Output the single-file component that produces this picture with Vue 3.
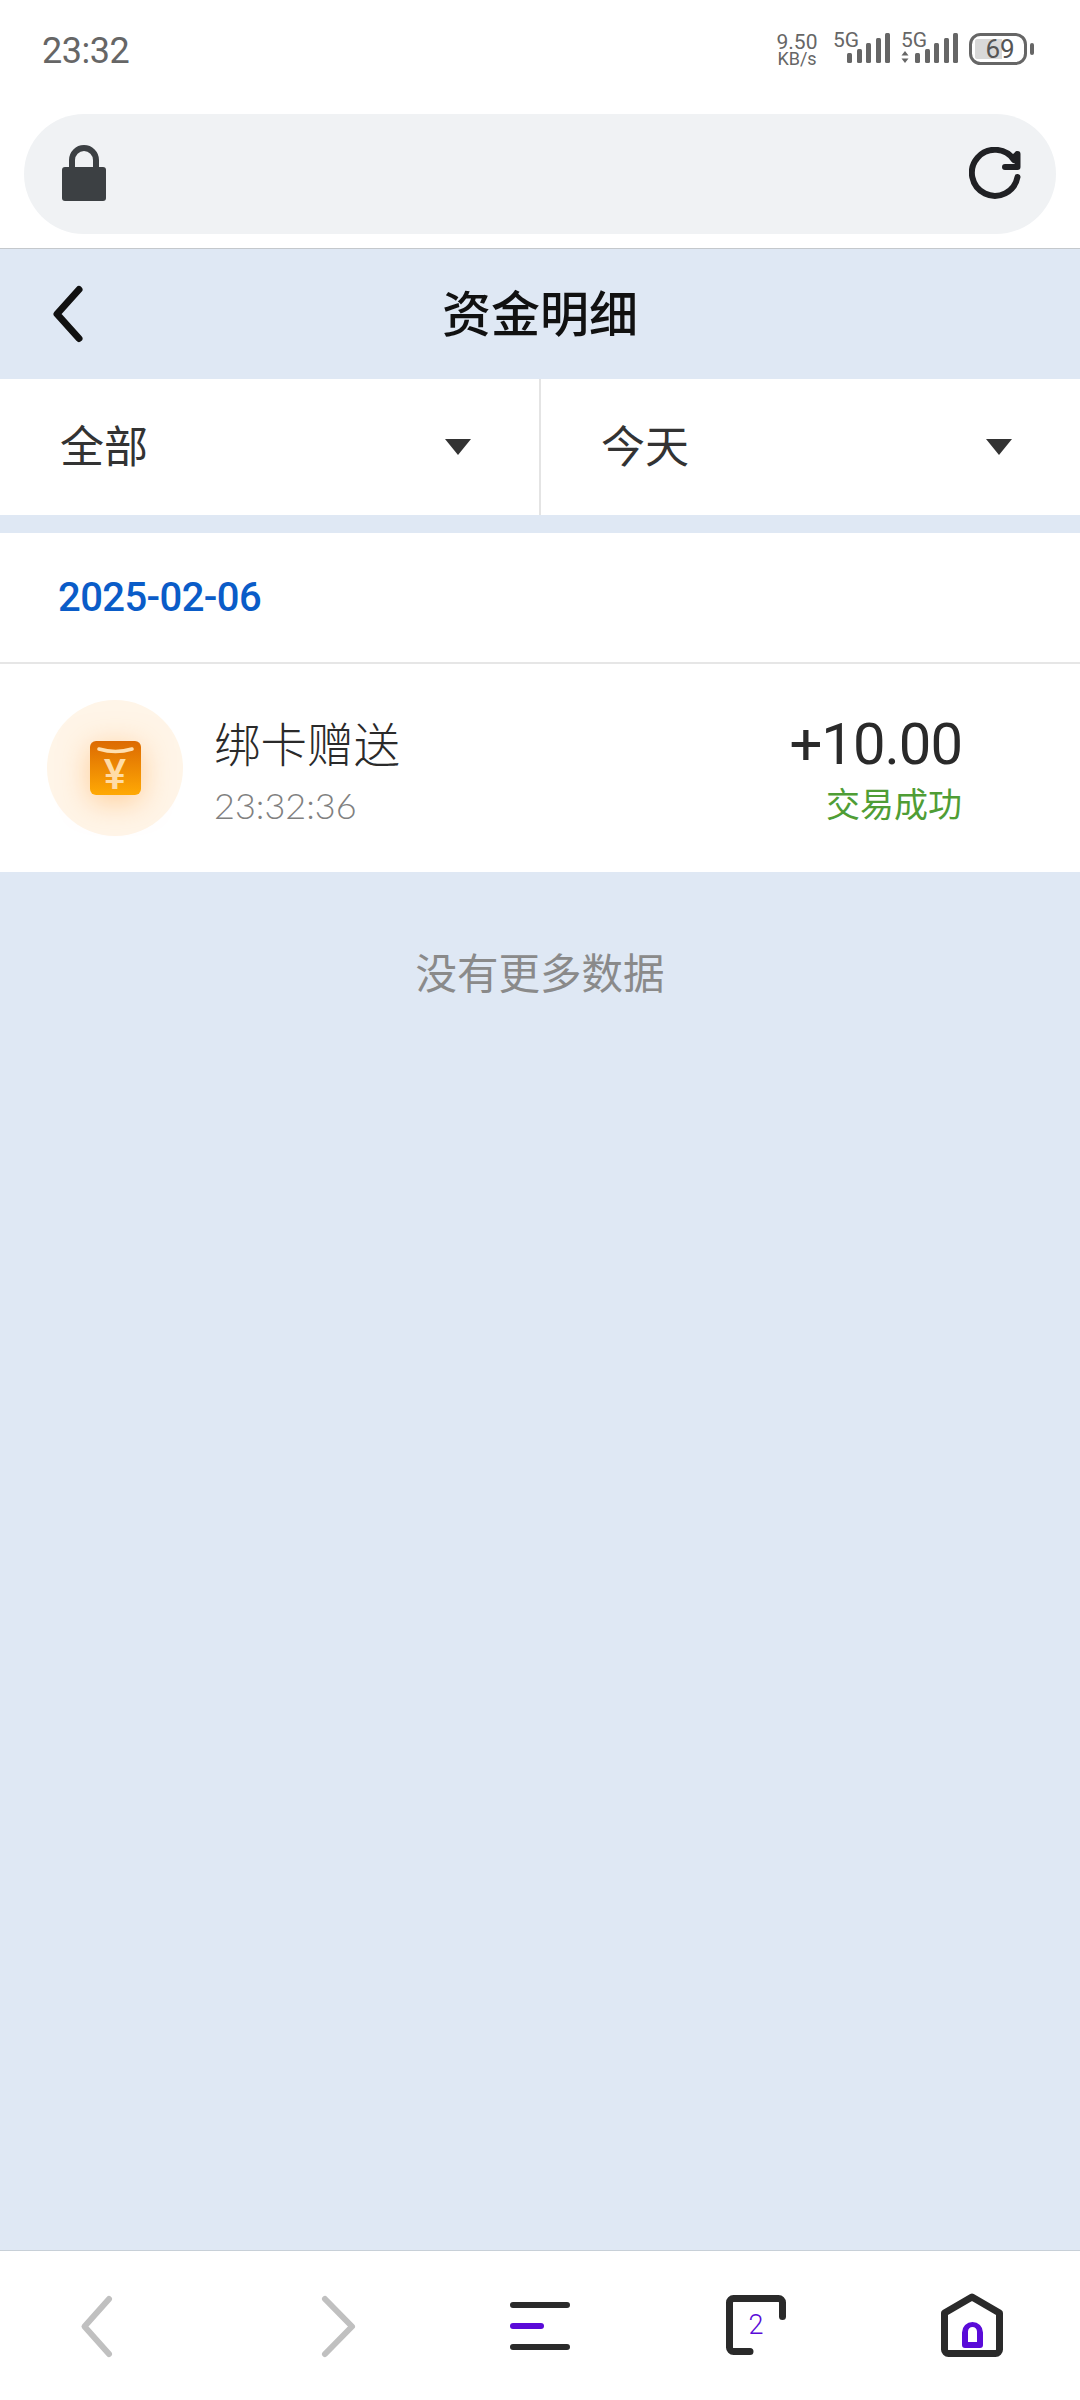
<template>
  <div class="page">
    <div class="status-bar">
      <span class="clock">23:32</span>
      <div class="status-icons">
        <div class="speed">
          <span>9.50</span>
          <span class="speed-unit">KB/s</span>
        </div>
        <div class="sim">
          <span class="sim-label">5G</span>
          <svg width="43" height="30" viewBox="0 0 43 30">
            <rect v-for="bar in bars" :key="bar.x" :x="bar.x" :y="bar.y" width="5" :height="30 - bar.y" rx="1.5" fill="#666" />
          </svg>
        </div>
        <div class="sim">
          <span class="sim-label">5G</span>
          <svg class="updown" width="8" height="12" viewBox="0 0 8 12">
            <path d="M4 0 7.500 4.500H.5ZM4 12 .5 7.500h7Z" fill="#666" />
          </svg>
          <svg width="43" height="30" viewBox="0 0 43 30">
            <rect v-for="bar in bars" :key="bar.x" :x="bar.x" :y="bar.y" width="5" :height="30 - bar.y" rx="1.500" fill="#666" />
          </svg>
        </div>
        <svg class="battery" width="66" height="32" viewBox="0 0 66 32">
          <rect x="1.500" y="1.500" width="55" height="29" rx="10" fill="none" stroke="#666" stroke-width="3" />
          <path d="M8 6h25v20H8a2 2 0 0 1-2-2V8a2 2 0 0 1 2-2Z" fill="#d9d9d9" />
          <text x="31" y="25" text-anchor="middle" class="battery-text">69</text>
          <rect x="61" y="10" width="4" height="12" rx="2" fill="#666" />
        </svg>
      </div>
    </div>

    <div class="address-wrap">
      <div class="address">
        <svg class="lock" width="44" height="56" viewBox="0 0 44 56">
          <path d="M10 24V15a12 12 0 0 1 24 0v9" fill="none" stroke="#3c4043" stroke-width="6" />
          <rect x="0" y="22" width="44" height="34" rx="3" fill="#3c4043" />
        </svg>
        <svg width="54" height="54" viewBox="0 0 54 54">
          <path d="M48.500 30A23 23 0 1 1 45 13" fill="none" stroke="#202124" stroke-width="6" stroke-linecap="round" />
          <path d="M48.500 7V20H36" fill="none" stroke="#202124" stroke-width="6" stroke-linecap="round" stroke-linejoin="round" />
          <path d="M40 10 48 4V18Z" fill="#202124" />
        </svg>
      </div>
    </div>

    <header class="title-bar">
      <svg class="back" width="36" height="64" viewBox="0 0 36 64">
        <path d="M30 7.500 8 32l22 24.500" fill="none" stroke="#111" stroke-width="7" stroke-linecap="round" stroke-linejoin="round" />
      </svg>
      <h1>资金明细</h1>
      <span></span>
    </header>

    <div class="filters">
      <div v-for="filter in filters" :key="filter" class="filter">
        <span class="filter-name">{{ filter }}</span>
        <svg width="28" height="16" viewBox="0 0 28 16">
          <path d="M1 0H27L14 16Z" fill="#333" />
        </svg>
      </div>
    </div>

    <div class="date-row">2025-02-06</div>

    <div class="record">
      <div class="record-icon">
        <div class="packet">
          <svg width="37" height="12" viewBox="0 0 37 12">
            <path d="M2 3Q18.500 8 35 3" fill="none" stroke="#ffdfb0" stroke-width="3.500" stroke-linecap="round" />
          </svg>
          <span class="packet-mark">¥</span>
        </div>
      </div>
      <div class="record-main">
        <div class="record-title">绑卡赠送</div>
        <div class="record-time">23:32:36</div>
      </div>
      <div class="record-side">
        <div class="record-amount">+10.00</div>
        <div class="record-state">交易成功</div>
      </div>
    </div>

    <div class="content-end">
      <p>没有更多数据</p>
    </div>

    <nav class="bottom-nav">
      <svg width="120" height="90" viewBox="0 0 120 90">
        <path d="M61 18 36.500 45.500 61 73" class="nav-line muted" />
      </svg>
      <svg width="120" height="90" viewBox="0 0 120 90">
        <path d="M61 18 88 45.500 61 73" class="nav-line muted" />
      </svg>
      <svg width="120" height="90" viewBox="0 0 120 90">
        <path d="M33 24H87M33 66H87" class="nav-line dark" />
        <path d="M33 45H61" class="nav-line accent" />
      </svg>
      <svg width="120" height="90" viewBox="0 0 120 90">
        <path d="M86.500 35.500V21.500a4 4 0 0 0-4-4H37.500a4 4 0 0 0-4 4V66.500a4 4 0 0 0 4 4H54" class="nav-line thick dark" />
        <text x="60" y="53" text-anchor="middle" class="tab-count">2</text>
      </svg>
      <svg width="120" height="90" viewBox="0 0 120 90">
        <path d="M60 16 87.500 32V68.500a4 4 0 0 1-4 4H36.500a4 4 0 0 1-4-4V32Z" class="nav-line thick dark" />
        <path d="M50 64V51.500a10.500 10.500 0 0 1 21 0V64a3 3 0 0 1-3 3H53a3 3 0 0 1-3-3ZM56 61H65V50.500a4.500 4.500 0 0 0-9 0Z" fill="#5a0bd8" fill-rule="evenodd" />
      </svg>
    </nav>
  </div>
</template>

<script setup>
const filters = ['全部', '今天']

const bars = [
  { x: 0, y: 20 },
  { x: 10, y: 16 },
  { x: 19, y: 10 },
  { x: 29, y: 5 },
  { x: 38, y: 0 },
]
</script>

<style>
body {
  margin: 0;
  background: #fff;
}
</style>

<style scoped>
.page {
  display: flex;
  flex-direction: column;
  width: 1080px;
  height: 2400px;
  overflow: hidden;
  background: #dfe8f4;
  font-family: Roboto, "Noto Sans CJK SC", sans-serif;
}

.status-bar {
  display: flex;
  justify-content: space-between;
  height: 100px;
  padding: 0 45px 0 42px;
  box-sizing: border-box;
  background: #fff;
  color: #666;
}

.clock {
  margin-top: 30px;
  font-size: 36px;
  line-height: 42px;
  letter-spacing: -0.5px;
}

.status-icons {
  display: flex;
  align-items: flex-start;
  margin-top: 33px;
}

.speed {
  display: flex;
  flex-direction: column;
  align-items: center;
  width: 42px;
  font-size: 21px;
  line-height: 18px;
}

.speed-unit {
  font-size: 18px;
  line-height: 16px;
}

.sim {
  position: relative;
  width: 57px;
  height: 30px;
  margin-left: 11px;
  display: flex;
  justify-content: flex-end;
  align-items: flex-end;
}

.speed + .sim {
  margin-left: 15px;
}

.sim-label {
  position: absolute;
  left: 0;
  top: -4px;
  font-size: 21px;
  line-height: 22px;
}

.updown {
  margin-right: 6px;
}

.battery {
  margin-left: 11px;
}

.battery-text {
  font-size: 26px;
  font-family: Roboto, sans-serif;
  fill: #555;
}

.address-wrap {
  padding: 14px 24px;
  background: #fff;
}

.address {
  display: flex;
  justify-content: space-between;
  align-items: center;
  height: 120px;
  padding: 0 33px 0 38px;
  border-radius: 60px;
  background: #f0f2f4;
}

.lock {
  margin-bottom: 2px;
}

.title-bar {
  display: grid;
  grid-template-columns: 1fr auto 1fr;
  align-items: center;
  height: 130px;
  padding: 0 49px;
  border-top: 1px solid #c4c8cc;
}

.back {
  display: block;
}

.title-bar h1 {
  margin: 0 0 8px;
  font-size: 49px;
  font-weight: 500;
  color: #111;
}

.filters {
  display: flex;
  height: 136px;
  background: #fff;
}

.filter {
  display: flex;
  justify-content: space-between;
  align-items: center;
  box-sizing: border-box;
  width: 539px;
  padding: 0 67px 0 60px;
  font-size: 44px;
  color: #333;
}

.filter + .filter {
  width: 541px;
  padding: 0 67px 0 60px;
  border-left: 2px solid #e4e4e4;
}

.filter-name {
  margin-bottom: 6px;
}

.date-row {
  margin-top: 18px;
  height: 129px;
  padding-left: 58px;
  line-height: 129px;
  background: #fff;
  border-bottom: 2px solid #e6e6e6;
  font-size: 40px;
  font-weight: 500;
  letter-spacing: -0.6px;
  color: #0a5cc8;
}

.record {
  display: flex;
  align-items: center;
  height: 208px;
  padding: 0 118px 0 47px;
  background: #fff;
}

.record-icon {
  display: flex;
  justify-content: center;
  align-items: center;
  width: 136px;
  height: 136px;
  border-radius: 50%;
  background: #fff5e8;
}

.packet {
  display: flex;
  flex-direction: column;
  align-items: center;
  width: 51px;
  height: 54px;
  padding-top: 5px;
  box-sizing: border-box;
  border-radius: 6px;
  background: linear-gradient(#dc6a02, #ffa904);
  box-shadow: 0 6px 30px rgba(255, 165, 70, 0.5);
}

.packet svg {
  display: block;
}

.packet-mark {
  font-size: 42px;
  line-height: 34px;
  font-weight: 500;
  color: #ffdca6;
}

.record-main {
  flex: 1;
  margin-left: 31px;
  padding-top: 10px;
}

.record-title {
  font-size: 46.5px;
  line-height: 52px;
  font-weight: 300;
  color: #2a2a2a;
}

.record-time {
  margin-top: 11px;
  font-family: Lato, sans-serif;
  font-size: 36px;
  line-height: 44px;
  font-weight: 300;
  color: #808080;
}

.record-side {
  padding-top: 8px;
  text-align: right;
}

.record-amount {
  font-size: 58px;
  line-height: 52px;
  letter-spacing: -1px;
  color: #2a2a2a;
}

.record-state {
  margin-top: 13px;
  font-size: 34px;
  line-height: 44px;
  color: #4f9d35;
}

.content-end {
  flex: 1;
  text-align: center;
}

.content-end p {
  margin: 74px 0 0;
  font-size: 41.5px;
  line-height: 58px;
  color: #8a8a8a;
}

.bottom-nav {
  display: grid;
  grid-template-columns: repeat(5, 1fr);
  justify-items: center;
  height: 150px;
  padding-top: 30px;
  box-sizing: border-box;
  border-top: 1px solid #c8d0d8;
  background: #fff;
}

.nav-line {
  fill: none;
  stroke-width: 6;
  stroke-linecap: round;
  stroke-linejoin: round;
}

.nav-line.thick {
  stroke-width: 7;
}

.nav-line.muted {
  stroke: #c0c0c0;
}

.nav-line.dark {
  stroke: #2a2a2a;
}

.nav-line.accent {
  stroke: #5a0bd8;
}

.tab-count {
  font-size: 27px;
  font-weight: 300;
  font-family: Roboto, sans-serif;
  fill: #5a0bd8;
}
</style>
